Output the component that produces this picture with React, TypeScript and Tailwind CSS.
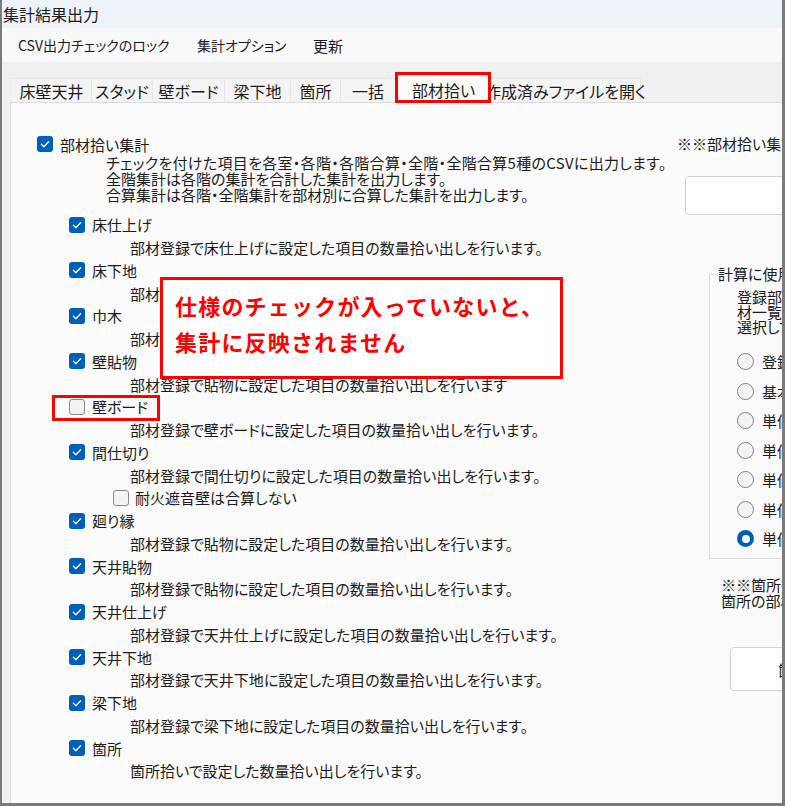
import React from 'react';

const FONT = "font-['Noto_Sans_CJK_JP','Noto_Sans',sans-serif]";

type Item = { label: string; desc: string; checked?: boolean; sub?: string };

const ITEMS: Item[] = [
  { label: '床仕上げ', desc: '部材登録で床仕上げに設定した項目の数量拾い出しを行います。', checked: true },
  { label: '床下地', desc: '部材登録で床下地に設定した項目の数量拾い出しを行います。', checked: true },
  { label: '巾木', desc: '部材登録で巾木に設定した項目の数量拾い出しを行います。', checked: true },
  { label: '壁貼物', desc: '部材登録で貼物に設定した項目の数量拾い出しを行います', checked: true },
  { label: '壁ボード', desc: '部材登録で壁ボードに設定した項目の数量拾い出しを行います。', checked: false },
  { label: '間仕切り', desc: '部材登録で間仕切りに設定した項目の数量拾い出しを行います。', checked: true, sub: '耐火遮音壁は合算しない' },
  { label: '廻り縁', desc: '部材登録で貼物に設定した項目の数量拾い出しを行います。', checked: true },
  { label: '天井貼物', desc: '部材登録で貼物に設定した項目の数量拾い出しを行います。', checked: true },
  { label: '天井仕上げ', desc: '部材登録で天井仕上げに設定した項目の数量拾い出しを行います。', checked: true },
  { label: '天井下地', desc: '部材登録で天井下地に設定した項目の数量拾い出しを行います。', checked: true },
  { label: '梁下地', desc: '部材登録で梁下地に設定した項目の数量拾い出しを行います。', checked: true },
  { label: '箇所', desc: '箇所拾いで設定した数量拾い出しを行います。', checked: true },
];

const TABS = [
  { label: '床壁天井', w: 'w-[80px]' },
  { label: 'スタッド', w: 'w-[61px]' },
  { label: '壁ボード', w: 'w-[72px]' },
  { label: '梁下地', w: 'w-[66px]' },
  { label: '箇所', w: 'w-[50px]' },
  { label: '一括', w: 'w-[55px]' },
  { label: '部材拾い', w: 'w-[95px]', active: true },
  { label: '作成済みファイルを開く', w: 'w-[150px]' },
];

const RADIOS = ['登録部材の単価', '基本単価', '単価1', '単価2', '単価3', '単価4', '単価5'];

function Check({ checked }: { checked?: boolean }) {
  if (!checked) {
    return <span className="block w-4 h-4 flex-none rounded-[3px] border border-[#8a8a8a] bg-[#f3f3f3]" />;
  }
  return (
    <span className="flex w-4 h-4 flex-none items-center justify-center rounded-[3px] bg-[#005fb8]">
      <svg viewBox="0 0 16 16" className="w-4 h-4">
        <path d="M4.4 8.3 L6.9 10.7 L11.6 5.7" fill="none" stroke="#fff" strokeWidth="1.3" strokeLinecap="round" strokeLinejoin="round" />
      </svg>
    </span>
  );
}

function Radio({ checked }: { checked?: boolean }) {
  if (checked) {
    return (
      <span className="flex w-[17px] h-[17px] flex-none items-center justify-center rounded-full bg-[#005fb8]">
        <span className="block w-[8px] h-[8px] rounded-full bg-white" />
      </span>
    );
  }
  return <span className="block w-[17px] h-[17px] flex-none rounded-full border border-[#7f7f7f] bg-[#f3f3f3]" />;
}

export default function App() {
  return (
    <div className={`relative w-[785px] h-[806px] overflow-hidden bg-white text-[#1b1b1b] ${FONT} [font-feature-settings:'palt']`}>
      <div className="flex flex-col w-[785px] h-[806px] border-l-2 border-r-[3px] border-b-[3px] border-[#7a7a7a] overflow-hidden">
        {/* title */}
        <div className="h-[28px] flex-none flex items-center pl-[1px] bg-[#eef3f9] text-[16px] leading-none [font-feature-settings:normal]">
          集計結果出力
        </div>

        {/* menu */}
        <div className="h-[34px] flex-none flex items-center pl-[16px] bg-[#f9f9f9] text-[14px] leading-none">
          <span className="w-[179px]">CSV出力チェックのロック</span>
          <span className="w-[116px]">集計オプション</span>
          <span className="text-[15px]">更新</span>
        </div>

        {/* tabs + panel */}
        <div className="flex-1 flex flex-col min-h-0 bg-[#f0f0f0] pl-[8px] pt-[13px]">
          <div className="flex items-end h-[27px] pl-[2px] flex-none">
            {TABS.map((t) =>
              t.active ? (
                <div key={t.label} className={`${t.w} h-[28px] -mb-px relative z-10 flex items-center justify-center bg-[#fafafa] border border-b-0 border-[#dcdcdc] text-[16px] leading-none`}>
                  {t.label}
                </div>
              ) : (
                <div key={t.label} className={`${t.w} h-[24px] flex items-center justify-center bg-[#f4f4f4] border-r border-t border-[#e6e6e6] text-[16px] leading-none whitespace-nowrap`}>
                  {t.label}
                </div>
              )
            )}
          </div>

          <div className="flex-1 flex min-h-0 overflow-hidden bg-[#fafafa] border-l border-t border-[#dcdcdc]">
            {/* left column */}
            <div className="w-[666px] flex-none pl-[26px] pt-[30px] text-[15px]">
              <div className="h-[22px] flex items-center gap-[7px]">
                <Check checked />
                <span className="leading-none">部材拾い集計</span>
              </div>
              <div className="pl-[69px] leading-[16px] whitespace-nowrap">
                <div className="tracking-[0.3px]">チェックを付けた項目を各室・各階・各階合算・全階・全階合算5種のCSVに出力します。</div>
                <div>全階集計は各階の集計を合計した集計を出力します。</div>
                <div>合算集計は各階・全階集計を部材別に合算した集計を出力します。</div>
              </div>

              <div className="mt-[10.5px] pl-[32px]">
                {ITEMS.map((it) => (
                  <div key={it.label}>
                    <div className="h-[22.75px] flex items-center gap-[7px]">
                      <Check checked={it.checked} />
                      <span className="leading-none">{it.label}</span>
                    </div>
                    <div className="h-[22.75px] flex items-center pl-[61px] whitespace-nowrap leading-none">{it.desc}</div>
                    {it.sub && (
                      <div className="h-[22.75px] flex items-center gap-[6px] pl-[44px]">
                        <Check />
                        <span className="leading-none">{it.sub}</span>
                      </div>
                    )}
                  </div>
                ))}
              </div>
            </div>

            {/* right column */}
            <div className="w-[220px] flex-none pt-[33px] text-[15px] whitespace-nowrap">
              <div className="leading-[16px]">※※部材拾い集計の出力先</div>
              <div className="ml-[8px] mt-[24px] w-[160px] h-[39px] rounded-[4px] border border-[#d3d3d3] bg-white" />

              <fieldset className="ml-[32px] mt-[51px] w-[200px] border border-[#dcdcdc] pb-[5px]">
                <legend className="ml-[7px] px-[1px] leading-[16px]">計算に使用する単価</legend>
                <div className="pl-[27px] pt-[7px] leading-[15px]">
                  <div>登録部材の単価か部</div>
                  <div>材一覧の単価を使用するか</div>
                  <div>選択してください。</div>
                </div>
                <div className="pl-[27px] mt-[12.75px]">
                  {RADIOS.map((r, i) => (
                    <div key={r} className="h-[29.5px] flex items-center gap-[8px]">
                      <Radio checked={i === RADIOS.length - 1} />
                      <span className="leading-none">{r}</span>
                    </div>
                  ))}
                </div>
              </fieldset>

              <div className="ml-[44px] mt-[18px] leading-[16px]">
                <div>※※箇所拾いの集計は</div>
                <div>箇所の部材を集計します</div>
              </div>

              <div className="ml-[53px] mt-[38px] w-[160px] h-[44px] flex items-center pl-[47px] rounded-[4px] border border-[#d3d3d3] bg-white leading-none">
                箇所集計
              </div>
            </div>
          </div>
        </div>
      </div>

      {/* annotations */}
      <div className="absolute z-20 left-[395px] top-[72px] w-[96px] h-[31px] border-[3px] border-[#ff0000]" />
      <div className="absolute z-20 left-[52px] top-[395px] w-[108px] h-[26px] border-[3px] border-[#ff0000]" />
      <div className="absolute z-20 left-[160px] top-[277px] w-[403px] h-[102px] border-[3px] border-[#ff0000] bg-white pl-[12px] pt-[7px] text-[22px] font-bold leading-[36px] tracking-[1.2px] text-[#ff0000] [font-feature-settings:normal] whitespace-nowrap">
        <div>仕様のチェックが入っていないと、</div>
        <div>集計に反映されません</div>
      </div>
    </div>
  );
}
